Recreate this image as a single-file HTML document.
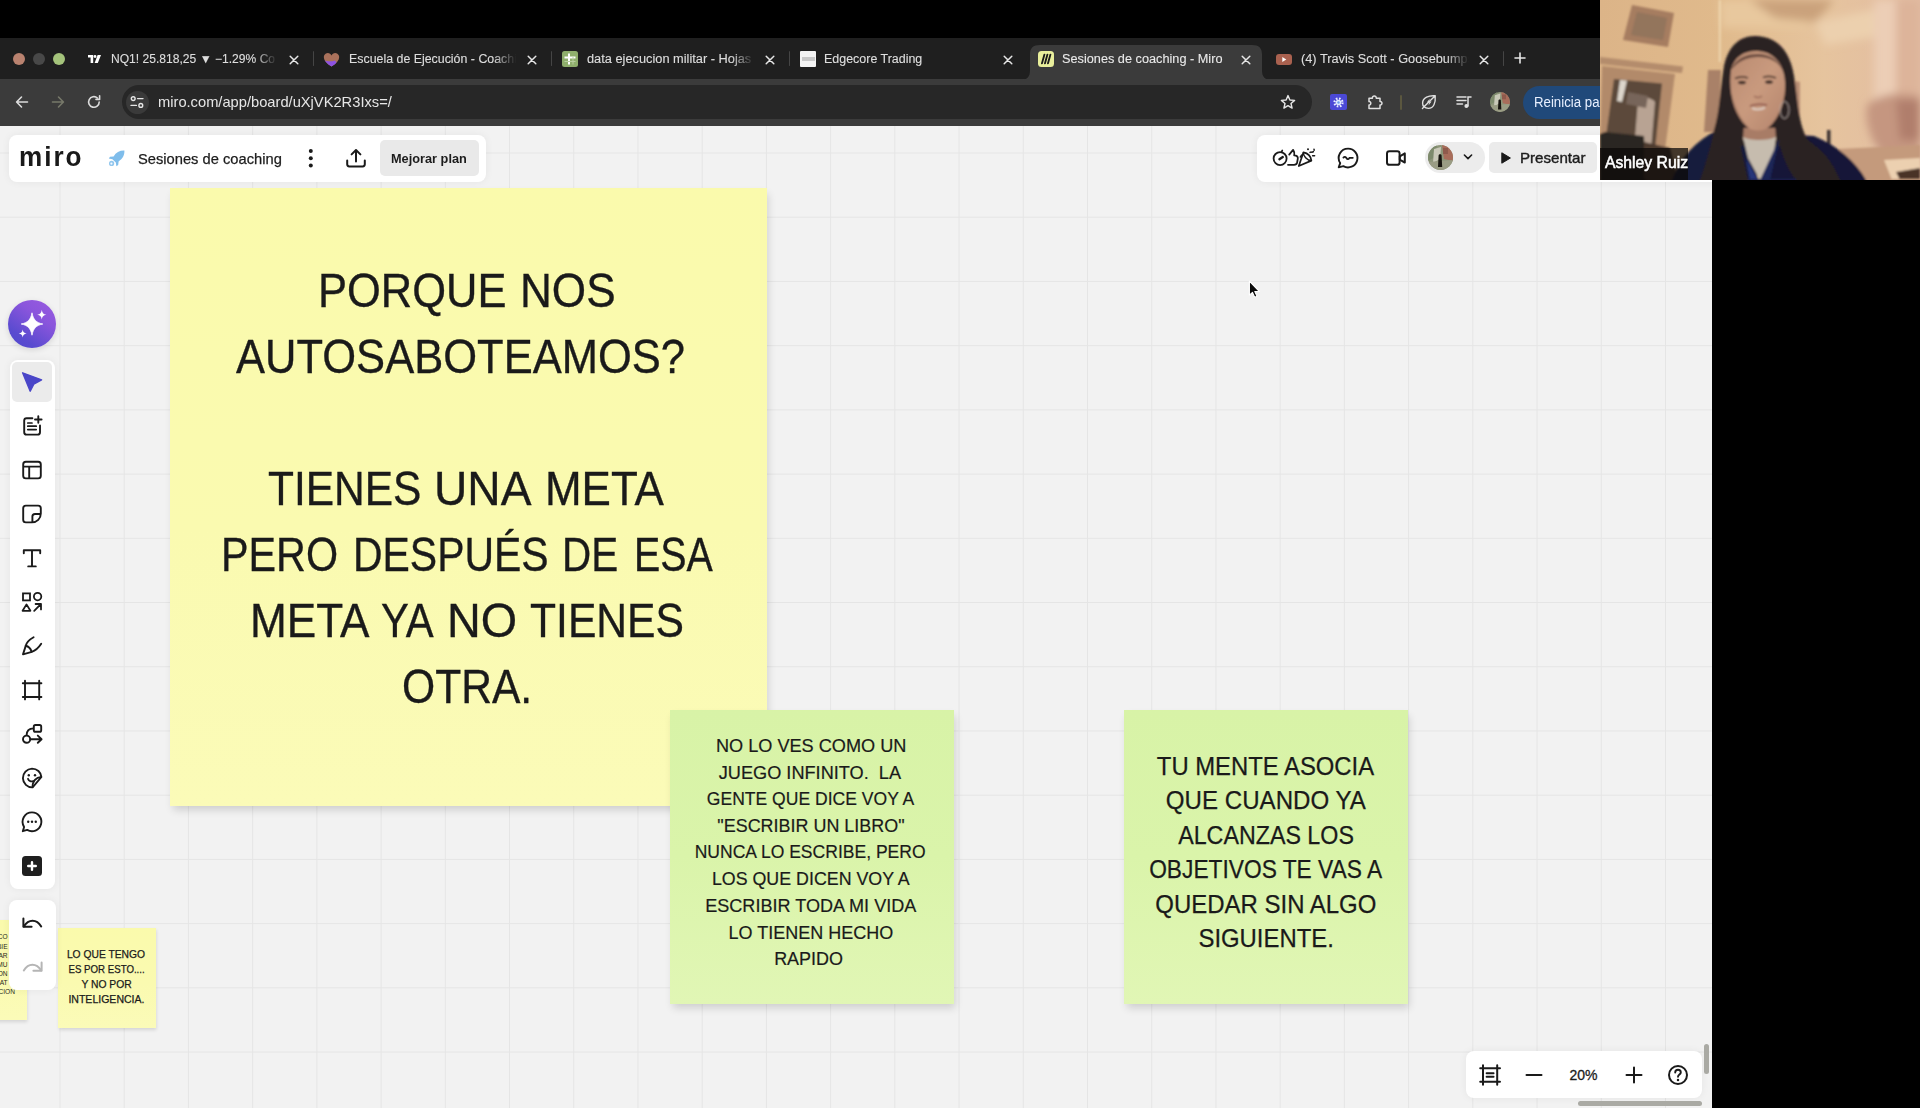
<!DOCTYPE html>
<html lang="es">
<head>
<meta charset="utf-8">
<title>Sesiones de coaching - Miro</title>
<style>
*{box-sizing:border-box;margin:0;padding:0}
html,body{width:1920px;height:1108px;overflow:hidden;background:#000;font-family:"Liberation Sans",sans-serif;}
#root{position:relative;width:1920px;height:1108px;overflow:hidden;background:#000}
.abs{position:absolute}
/* browser chrome */
#tabstrip{left:0;top:38px;width:1920px;height:42px;background:#1f1f1f}
#toolbar{left:0;top:79px;width:1920px;height:47px;background:#3b3b3b}
.tab{position:absolute;top:38px;height:42px;color:#e3e3e3;font-size:12px;line-height:42px;white-space:nowrap}
.tabtxt{position:absolute;top:0;overflow:hidden;height:42px}
.tabx{position:absolute;top:15px;width:11px;height:11px}
.sep{position:absolute;top:51px;width:1px;height:16px;background:#4a4a4a}
#activetab{left:1030px;top:44px;width:232px;height:36px;background:#3b3b3b;border-radius:10px 10px 0 0}
#omni{left:122.3px;top:85.2px;width:1189.5px;height:33.6px;border-radius:17px;background:#272727}
#url{left:157.5px;top:86px;height:33px;line-height:32px;font-size:14.5px;color:#e6e6e6;white-space:nowrap;transform-origin:0 50%}

.ico{position:absolute;overflow:visible}
.ttxt{-webkit-text-stroke:0.12px #dedede;position:absolute;top:38px;height:42px;line-height:42px;font-size:12px;color:#dedede;white-space:nowrap;overflow:hidden;transform-origin:0 50%}
.fade{-webkit-mask-image:linear-gradient(to right,#000 0,#000 calc(100% - 22px),transparent 100%);mask-image:linear-gradient(to right,#000 0,#000 calc(100% - 22px),transparent 100%)}
.tsep{position:absolute;top:51px;width:1.5px;height:15px;background:#454545;border-radius:1px}
.tl{position:absolute;top:52.5px;width:12px;height:12px;border-radius:50%}
/* canvas */
#canvas{left:0;top:126px;width:1712px;height:982px;background-color:#f2f2f2;
 background-image:linear-gradient(to right,#e5e5e5 1px,transparent 1px),linear-gradient(to bottom,#e5e5e5 1px,transparent 1px);
 background-size:64.23px 64.23px;background-position:59.5px 26.5px;overflow:hidden}
.panel{position:absolute;background:#fff;border-radius:8px;box-shadow:0 0 8px rgba(0,0,0,.06)}
.sticky{position:absolute;text-align:center;color:#1a1a1a;box-shadow:1.5px 5px 8px -1px rgba(0,0,0,.15)}
.ln{position:absolute;left:0;width:100%;text-align:center;white-space:nowrap;transform-origin:50% 50%}
.wd{position:absolute;white-space:nowrap;transform-origin:0 50%}
.yellow{background:linear-gradient(to bottom,#fafaac 0%,#fafab0 55%,#fbfbb8 100%)}
.green{background:linear-gradient(to bottom,#d8f3a7 0%,#daf4aa 50%,#e1f6b5 100%)}
</style>
</head>
<body>
<div id="root">
  <div class="abs" id="tabstrip"></div>
  <div class="abs" id="toolbar"></div>
  <!-- active tab -->
  <svg class="ico" style="left:1020px;top:45px" width="252" height="35" viewBox="0 0 252 36" preserveAspectRatio="none"><path d="M0 36 C7 36 10 33 10 26 L10 10 C10 3 13 0 20 0 L232 0 C239 0 242 3 242 10 L242 26 C242 33 245 36 252 36 Z" fill="#3b3b3b"/></svg>
  <!-- traffic lights -->
  <div class="tl" style="left:13px;background:#b9826f"></div>
  <div class="tl" style="left:33px;background:#484848"></div>
  <div class="tl" style="left:52.7px;background:#a4c37b"></div>
  <!-- tab 1 -->
  <svg class="ico" style="left:88px;top:55px" width="13" height="8" viewBox="0 0 13 8"><path d="M0 0H5.2V8H2.6V2.6H0Z" fill="#fff"/><circle cx="7" cy="1.5" r="1.4" fill="#fff"/><path d="M9.6 0H13L9.8 8H6.6Z" fill="#fff"/></svg>
  <div class="ttxt fade" id="t1" style="left:110.5px;--w:166px;width:164.9px;transform:scaleX(1.0068)">NQ1! 25.818,25 &#9660; &minus;1.29% Co</div>
  <svg class="ico" style="left:289px;top:54.5px" width="10" height="10" viewBox="0 0 10 10"><path d="M1.2 1.2L8.8 8.8M8.8 1.2L1.2 8.8" stroke="#e6e6e6" stroke-width="1.5" stroke-linecap="round" fill="none"/></svg>
  <div class="tsep" style="left:312.5px"></div>
  <!-- tab 2 -->
  <svg class="ico" style="left:323px;top:51px" width="17" height="16" viewBox="0 0 17 16"><defs><clipPath id="hc"><path d="M8.500 15.600C2 11.400 -0.400 7.400 1.400 4C3.200 0.800 7.400 1.400 8.500 4.600C9.600 1.400 13.800 0.800 15.600 4C17.400 7.400 15 11.400 8.500 15.600Z"/></clipPath></defs><g clip-path="url(#hc)"><rect width="17" height="16" fill="#a9715b"/><path d="M0 8.500C3 10.500 8 11 12 9.500L17 16H0Z" fill="#8d52e2"/></g></svg>
  <div class="ttxt fade" id="t2" style="left:348.5px;--w:167px;width:161.9px;transform:scaleX(1.0318)">Escuela de Ejecución - Coachi</div>
  <svg class="ico" style="left:527px;top:54.5px" width="10" height="10" viewBox="0 0 10 10"><path d="M1.2 1.2L8.8 8.8M8.8 1.2L1.2 8.8" stroke="#e6e6e6" stroke-width="1.5" stroke-linecap="round" fill="none"/></svg>
  <div class="tsep" style="left:550.5px"></div>
  <!-- tab 3 -->
  <svg class="ico" style="left:562px;top:51px" width="16" height="16" viewBox="0 0 16 16"><rect x="0" y="0" width="16" height="16" rx="2.5" fill="#8fae6c"/><path d="M7 2.5V13.5M2.5 6.5H13.5" stroke="#fff" stroke-width="2"/><path d="M2.5 10.5H13.5M11 6V13.5" stroke="#b9cfa0" stroke-width="1"/></svg>
  <div class="ttxt fade" id="t3" style="left:586.5px;--w:167px;width:156.6px;transform:scaleX(1.0662)">data ejecucion militar - Hojas d</div>
  <svg class="ico" style="left:765px;top:54.5px" width="10" height="10" viewBox="0 0 10 10"><path d="M1.2 1.2L8.8 8.8M8.8 1.2L1.2 8.8" stroke="#e6e6e6" stroke-width="1.5" stroke-linecap="round" fill="none"/></svg>
  <div class="tsep" style="left:788.5px"></div>
  <!-- tab 4 -->
  <div class="abs" style="left:800px;top:51px;width:16px;height:16px;background:#f4f4f4;border-radius:1px"></div>
  <div class="abs" style="left:801.5px;top:57px;width:13px;height:4px;background:#c9c9c9"></div>
  <div class="ttxt" id="t4" style="left:824px;--w:160px;width:154.2px;transform:scaleX(1.0376)">Edgecore Trading</div>
  <svg class="ico" style="left:1003px;top:54.5px" width="10" height="10" viewBox="0 0 10 10"><path d="M1.2 1.2L8.8 8.8M8.8 1.2L1.2 8.8" stroke="#e6e6e6" stroke-width="1.5" stroke-linecap="round" fill="none"/></svg>
  <!-- tab 5 active -->
  <svg class="ico" style="left:1038px;top:51px" width="16" height="16" viewBox="0 0 16 16"><rect width="16" height="16" rx="3.5" fill="#e9ef9c"/><path d="M4.6 3.6L3.4 12.4M7.6 3.6L6.4 12.4M10.6 3.6L9.4 12.4" stroke="#1a1a1a" stroke-width="1.9" stroke-linecap="round" transform="skewX(-8) translate(2.3 0)"/></svg>
  <div class="ttxt" id="t5" style="left:1062px;--w:175px;width:165.1px;color:#ececec;transform:scaleX(1.06)">Sesiones de coaching - Miro</div>
  <svg class="ico" style="left:1241px;top:54.5px" width="10" height="10" viewBox="0 0 10 10"><path d="M1.2 1.2L8.8 8.8M8.8 1.2L1.2 8.8" stroke="#e6e6e6" stroke-width="1.5" stroke-linecap="round" fill="none"/></svg>
  <!-- tab 6 -->
  <svg class="ico" style="left:1276px;top:53.5px" width="16" height="11" viewBox="0 0 16 11"><rect width="16" height="11" rx="3" fill="#a9614f"/><path d="M6.3 3L10.3 5.5L6.3 8Z" fill="#fff"/></svg>
  <div class="ttxt fade" id="t6" style="left:1300.5px;--w:168px;width:158.0px;transform:scaleX(1.0634)">(4) Travis Scott - Goosebumps</div>
  <svg class="ico" style="left:1479px;top:54.5px" width="10" height="10" viewBox="0 0 10 10"><path d="M1.2 1.2L8.8 8.8M8.8 1.2L1.2 8.8" stroke="#e6e6e6" stroke-width="1.5" stroke-linecap="round" fill="none"/></svg>
  <div class="tsep" style="left:1502.5px"></div>
  <svg class="ico" style="left:1514px;top:52px" width="12" height="12" viewBox="0 0 12 12"><path d="M6 1V11M1 6H11" stroke="#e6e6e6" stroke-width="1.6" stroke-linecap="round"/></svg>

  <!-- toolbar -->
  <svg class="ico" style="left:14px;top:94px" width="16" height="16" viewBox="0 0 16 16"><path d="M13.5 8H3M7.5 3L2.6 8L7.5 13" stroke="#dcdcdc" stroke-width="1.6" fill="none" stroke-linecap="round" stroke-linejoin="round"/></svg>
  <svg class="ico" style="left:50px;top:94px" width="16" height="16" viewBox="0 0 16 16"><path d="M2.5 8H13M8.5 3L13.4 8L8.5 13" stroke="#77796a" stroke-width="1.6" fill="none" stroke-linecap="round" stroke-linejoin="round"/></svg>
  <svg class="ico" style="left:86px;top:94px" width="16" height="16" viewBox="0 0 16 16"><path d="M13.2 8A5.3 5.3 0 1 1 11.4 4" stroke="#dcdcdc" stroke-width="1.6" fill="none" stroke-linecap="round"/><path d="M13.6 1.8V5.4H10" stroke="#dcdcdc" stroke-width="1.6" fill="none" stroke-linecap="round" stroke-linejoin="round"/></svg>
  <div class="abs" id="omni"></div>
  <div class="abs" style="left:125.5px;top:90.5px;width:23px;height:23px;border-radius:50%;background:#3a3a3a"></div>
  <svg class="ico" style="left:130px;top:95px" width="14" height="14" viewBox="0 0 14 14"><circle cx="3.2" cy="3.6" r="1.9" stroke="#e6e6e6" stroke-width="1.4" fill="none"/><path d="M7.6 3.6H13" stroke="#e6e6e6" stroke-width="1.4" stroke-linecap="round"/><circle cx="10.8" cy="10.4" r="1.9" stroke="#e6e6e6" stroke-width="1.4" fill="none"/><path d="M1 10.4H6.4" stroke="#e6e6e6" stroke-width="1.4" stroke-linecap="round"/></svg>
  <div class="abs" id="url" style=";transform:scaleX(1.0125)">miro.com/app/board/uXjVK2R3Ixs=/</div>
  <svg class="ico" style="left:1280px;top:94px" width="16" height="16" viewBox="0 0 16 16"><path d="M8 1.6L9.9 6L14.6 6.4L11 9.5L12.1 14.1L8 11.6L3.9 14.1L5 9.5L1.4 6.4L6.1 6Z" stroke="#e6e6e6" stroke-width="1.4" fill="none" stroke-linejoin="round"/></svg>
  <!-- extension icons -->
  <div class="abs" style="left:1330px;top:94px;width:16.5px;height:16px;background:#4b49d6;border-radius:2px"></div>
  <svg class="ico" style="left:1331.5px;top:95.5px" width="13" height="13" viewBox="0 0 13 13"><circle cx="6.5" cy="6.5" r="4" fill="none" stroke="#e8ecff" stroke-width="2.2" stroke-dasharray="1.6 1.55"/><circle cx="6.5" cy="6.5" r="2.8" fill="#dfe8ff"/><circle cx="6.5" cy="6.5" r="1.2" fill="#6aa0f0"/></svg>
  <svg class="ico" style="left:1366px;top:93px" width="18" height="18" viewBox="0 0 18 18"><path d="M3 5.2H6.4C6 2.2 10.6 2.2 10.2 5.2H14V8.6C16.6 8.2 16.6 12.4 14 12V15.4H3V12C5.4 12.2 5.4 8.4 3 8.6Z" stroke="#e0e0e0" stroke-width="1.5" fill="none" stroke-linejoin="round"/></svg>
  <div class="abs" style="left:1400.3px;top:95px;width:1.5px;height:15px;background:#5b573f;border-radius:1px"></div>
  <svg class="ico" style="left:1420px;top:93px" width="18" height="18" viewBox="0 0 18 18"><path d="M15.2 2.8C9 2.2 2.6 4.6 2.6 10.2C2.6 11.8 3.2 13 4 13.8L2.4 15.6M4 13.8C5 14.8 6.6 15.4 8.4 15.4C13.6 15.4 15.8 10 15.2 2.8Z" stroke="#e0e0e0" stroke-width="1.4" fill="none" stroke-linejoin="round" stroke-linecap="round"/><path d="M9.8 5.6L6.8 9.6H9.4L8.4 12.6L11.6 8.4H9Z" fill="#e0e0e0"/></svg>
  <svg class="ico" style="left:1456px;top:94px" width="16" height="16" viewBox="0 0 16 16"><path d="M1 3H10M1 6.5H10M1 10H6.5" stroke="#e0e0e0" stroke-width="1.5" stroke-linecap="round"/><path d="M12 12V3H15" stroke="#e0e0e0" stroke-width="1.5" fill="none" stroke-linecap="round"/><circle cx="10.4" cy="12" r="2" fill="#e0e0e0"/></svg>
  <svg class="ico" style="left:1489.700px;top:92px" width="20" height="20" viewBox="0 0 25 25"><g clip-path="url(#av1)"><rect width="25" height="25" fill="#8d9579"/><path d="M0 0H9L7 12L0 16Z" fill="#7d8a6c"/><path d="M6 4L13 2L12 14L5 18Z" fill="#c9c8b8"/><path d="M14 0H25V16L16 14Z" fill="#a86c5a"/><path d="M15 3H20V9H15Z" fill="#8f5a4c"/><path d="M0 17L25 15V25H0Z" fill="#9a9c84"/><path d="M10.600 10.500C10.600 8.800 13.600 8.800 13.600 10.500L14.200 22H10Z" fill="#17140f"/></g></svg>
  <div class="abs" id="bluepill" style="left:1522.5px;top:85.5px;width:120px;height:33.5px;border-radius:17px;background:#20497a"></div>
  <div class="abs" id="reinicia" style="left:1534px;top:85.5px;height:33.5px;line-height:33px;font-size:14px;color:#e8f0ff;white-space:nowrap;transform-origin:0 50%;transform:scaleX(0.9455)">Reinicia para actualizar</div>

  <div class="abs" id="canvas">
    <!--STICKIES-->
    <div class="sticky yellow" id="s1" style="left:169.6px;top:62px;width:597.3px;height:618.2px;font-size:47.2px;line-height:52.732px;-webkit-text-stroke:0.35px #1a1a1a;">
      <div class="wd" style="left:147.92px;top:76.97px;transform:scaleX(0.9211)">PORQUE</div>
      <div class="wd" style="left:350.16px;top:76.97px;transform:scaleX(0.9344)">NOS</div>
      <div class="wd" style="left:66.90px;top:143.07px;transform:scaleX(0.9223)">AUTOSABOTEAMOS?</div>
      <div class="wd" style="left:98.70px;top:275.27px;transform:scaleX(0.9000)">TIENES</div>
      <div class="wd" style="left:264.24px;top:275.27px;transform:scaleX(0.9776)">UNA</div>
      <div class="wd" style="left:375.87px;top:275.27px;transform:scaleX(0.9317)">META</div>
      <div class="wd" style="left:51.10px;top:340.97px;transform:scaleX(0.8750)">PERO</div>
      <div class="wd" style="left:183.13px;top:340.97px;transform:scaleX(0.8676)">DESPUÉS</div>
      <div class="wd" style="left:392.87px;top:340.97px;transform:scaleX(0.8567)">DE</div>
      <div class="wd" style="left:464.46px;top:340.97px;transform:scaleX(0.8344)">ESA</div>
      <div class="wd" style="left:80.16px;top:407.17px;transform:scaleX(0.9358)">META</div>
      <div class="wd" style="left:211.71px;top:407.17px;transform:scaleX(0.8862)">YA</div>
      <div class="wd" style="left:277.24px;top:407.17px;transform:scaleX(0.9908)">NO</div>
      <div class="wd" style="left:360.00px;top:407.17px;transform:scaleX(0.9036)">TIENES</div>
      <div class="wd" style="left:232.79px;top:473.07px;transform:scaleX(0.9029)">OTRA.</div>
    </div>
    <div class="sticky green" id="s2" style="left:670px;top:584px;width:283.5px;height:293.6px;font-size:18.6px;line-height:20.78px;-webkit-text-stroke:0.2px #1a1a1a;">
      <div class="ln" id="s2_0" style="top:25.86px;transform:translateX(-0.61px) scaleX(0.9751)">NO LO VES COMO UN</div>
      <div class="ln" id="s2_1" style="top:52.56px;transform:translateX(-1.87px) scaleX(0.9766)">JUEGO INFINITO.&nbsp; LA</div>
      <div class="ln" id="s2_2" style="top:79.16px;transform:translateX(-1.28px) scaleX(0.9436)">GENTE QUE DICE VOY A</div>
      <div class="ln" id="s2_3" style="top:105.76px;transform:translateX(-0.81px) scaleX(0.9648)">"ESCRIBIR UN LIBRO"</div>
      <div class="ln" id="s2_4" style="top:132.36px;transform:translateX(-1.61px) scaleX(0.9428)">NUNCA LO ESCRIBE, PERO</div>
      <div class="ln" id="s2_5" style="top:159.26px;transform:translateX(-0.99px) scaleX(0.9583)">LOS QUE DICEN VOY A</div>
      <div class="ln" id="s2_6" style="top:185.96px;transform:translateX(-0.98px) scaleX(0.9714)">ESCRIBIR TODA MI VIDA</div>
      <div class="ln" id="s2_7" style="top:212.56px;transform:translateX(-0.89px) scaleX(0.9679)">LO TIENEN HECHO</div>
      <div class="ln" id="s2_8" style="top:239.26px;transform:translateX(-3.19px) scaleX(0.9657)">RAPIDO</div>
    </div>
    <div class="sticky green" id="s3" style="left:1124.2px;top:584px;width:283.9px;height:293.6px;font-size:25.1px;line-height:28.042px;-webkit-text-stroke:0.25px #1a1a1a;">
      <div class="ln" id="s3_0" style="top:42.38px;transform:translateX(-0.48px) scaleX(0.9502)">TU MENTE ASOCIA</div>
      <div class="ln" id="s3_1" style="top:76.48px;transform:translateX(-0.09px) scaleX(0.9604)">QUE CUANDO YA</div>
      <div class="ln" id="s3_2" style="top:111.08px;transform:translateX(0.08px) scaleX(0.9267)">ALCANZAS LOS</div>
      <div class="ln" id="s3_3" style="top:145.33px;transform:translateX(-0.29px) scaleX(0.9064)">OBJETIVOS TE VAS A</div>
      <div class="ln" id="s3_4" style="top:179.83px;transform:translateX(-0.11px) scaleX(0.9548)">QUEDAR SIN ALGO</div>
      <div class="ln" id="s3_5" style="top:214.48px;transform:translateX(0.22px) scaleX(0.9518)">SIGUIENTE.</div>
    </div>
    <div class="sticky yellow" id="s4" style="left:58px;top:802px;width:98.1px;height:100px;font-size:10.5px;line-height:11.731px;-webkit-text-stroke:0.25px #1a1a1a;box-shadow:0.5px 2px 3.5px rgba(0,0,0,.13);">
      <div class="ln" id="s4_0" style="top:20.89px;transform:translateX(-1.09px) scaleX(0.9797)">LO QUE TENGO</div>
      <div class="ln" id="s4_1" style="top:35.99px;transform:translateX(-0.45px) scaleX(0.9207)">ES POR ESTO....</div>
      <div class="ln" id="s4_2" style="top:51.09px;transform:translateX(-0.45px) scaleX(0.9820)">Y NO POR</div>
      <div class="ln" id="s4_3" style="top:66.19px;transform:translateX(-0.60px) scaleX(1.0027)">INTELIGENCIA.</div>
    </div>
    <div class="sticky yellow" id="s5" style="left:-72px;top:794.3px;width:99px;height:99.5px;font-size:6.6px;line-height:9.2px;color:#2a2a20;box-shadow:0.5px 2px 3.5px rgba(0,0,0,.13)">
      <div style="position:absolute;right:19.4px;top:12px;text-align:right;white-space:nowrap">CO<br>BIE<br>AR<br>MU<br>ON<br>MAT</div>
      <div style="position:absolute;right:12px;top:67.2px;text-align:right;white-space:nowrap">CION</div>
    </div>
<!--/STICKIES-->
  </div>


  <!-- MIRO UI (page coords) -->
  <div class="panel" id="ptop" style="left:8.5px;top:135px;width:477.5px;height:46.5px"></div>
  <div class="abs" id="logo" style="left:18.500px;top:140px;height:34px;line-height:34px;font-size:28px;font-weight:bold;color:#1a1a1a;letter-spacing:2.100px;white-space:nowrap;transform-origin:0 50%;transform:scaleX(0.9323)">miro</div>
  <svg class="ico" style="left:108px;top:149.5px" width="17" height="17" viewBox="0 0 17 17"><path d="M16.4 0.6C12 0.4 8 2.2 5.6 6.4L2 6.8L0.8 8.6L4.4 9.2L7.8 12.6L8.4 16.2L10.2 15L10.6 11.4C14.8 9 16.6 5 16.4 0.6Z" fill="#7fbdeb"/><circle cx="3.6" cy="13.4" r="2.6" fill="#7fbdeb" opacity=".85"/><circle cx="3.4" cy="13.6" r="1.1" fill="#f5f9ff"/></svg>
  <div class="abs" id="bname" style="-webkit-text-stroke:0.250px #1c1c1c;left:137.600px;top:140.700px;height:36px;line-height:36px;font-size:15px;color:#1c1c1c;white-space:nowrap;transform-origin:0 50%;transform:scaleX(0.9800)">Sesiones de coaching</div>
  <svg class="ico" style="left:307px;top:147px" width="8" height="23" viewBox="0 0 8 23"><circle cx="3.8" cy="4" r="2" fill="#1a1a1a"/><circle cx="3.8" cy="11.2" r="2" fill="#1a1a1a"/><circle cx="3.8" cy="18.4" r="2" fill="#1a1a1a"/></svg>
  <svg class="ico" style="left:344px;top:146px" width="24" height="24" viewBox="0 0 24 24"><path d="M3.2 14.5V18.3C3.2 19.6 4 20.4 5.3 20.4H18.7C20 20.4 20.8 19.6 20.8 18.3V14.5" stroke="#1a1a1a" stroke-width="2" fill="none" stroke-linecap="round"/><path d="M12 15.5V4.2M7.6 8.4L12 4L16.4 8.4" stroke="#1a1a1a" stroke-width="2" fill="none" stroke-linecap="round" stroke-linejoin="round"/></svg>
  <div class="abs" style="left:380px;top:140px;width:98.5px;height:35.5px;border-radius:5px;background:#e9e9e9"></div>
  <div class="abs" id="mejorar" style="left:390.700px;top:140.500px;height:35.5px;line-height:36px;font-size:13px;font-weight:bold;color:#1c1c1c;white-space:nowrap;transform-origin:0 50%;transform:scaleX(0.9806)">Mejorar plan</div>

  <div class="panel" id="pright" style="left:1256.500px;top:135px;width:470px;height:46.500px"></div>
  <!-- timer / 3 / party -->
  <svg class="ico" style="left:1272px;top:146px" width="44" height="24" viewBox="0 0 44 24"><circle cx="8.100" cy="12.600" r="6.500" stroke="#1a1a1a" stroke-width="1.800" fill="none"/><path d="M7.400 13.200L10.800 11" stroke="#1a1a1a" stroke-width="2.300" stroke-linecap="round"/><path d="M9.600 5.800L10.300 4.400" stroke="#1a1a1a" stroke-width="1.700" stroke-linecap="round"/><path d="M17.200 8.600L21.100 3.900C22.200 5.400 22.600 7.400 22.200 9.400C24.600 9.400 26.200 10.600 25.800 12.600L25.200 16.200C24.800 18 23.600 18.800 22 18.800H16" stroke="#1a1a1a" stroke-width="1.800" fill="none" stroke-linecap="round" stroke-linejoin="round"/><path d="M26.800 20L31.400 6.400C35.600 7.200 38.800 10.400 39.400 14.600Z" stroke="#1a1a1a" stroke-width="1.700" fill="none" stroke-linejoin="round"/><path d="M31.400 6.400C31 9.800 35 14.400 39.400 14.600" stroke="#1a1a1a" stroke-width="1.500" fill="none"/><path d="M29.600 9.200L28.400 11" stroke="#1a1a1a" stroke-width="1.600" stroke-linecap="round"/><circle cx="36" cy="3.300" r="1" fill="#1a1a1a"/><path d="M38 6.400C39.200 5.600 40.200 6.800 41.400 5.600M42 3.200L42.200 4.200M40.600 9.800H42.600" stroke="#1a1a1a" stroke-width="1.500" fill="none" stroke-linecap="round"/></svg>
  <!-- chat -->
  <svg class="ico" style="left:1336px;top:146px" width="24" height="24" viewBox="0 0 24 24"><path d="M12.100 2.600A9.400 9.400 0 1 1 7.300 20.100L2.700 21.300L4.200 17.100A9.400 9.400 0 0 1 12.100 2.600Z" stroke="#1a1a1a" stroke-width="1.900" fill="none" stroke-linejoin="round"/><path d="M7.400 11.600C8.400 10.400 9.600 10.600 10.400 12C11.200 13.400 12.400 13.800 13.400 11.800H16.800" stroke="#1a1a1a" stroke-width="1.800" fill="none" stroke-linecap="round" stroke-linejoin="round"/></svg>
  <!-- video -->
  <svg class="ico" style="left:1384px;top:146px" width="24" height="24" viewBox="0 0 24 24"><rect x="3" y="5.2" width="12.6" height="13.6" rx="2.4" stroke="#1a1a1a" stroke-width="2" fill="none"/><path d="M15.8 10.4L20.8 7.4V16.6L15.8 13.6Z" stroke="#1a1a1a" stroke-width="2" fill="none" stroke-linejoin="round"/></svg>
  <div class="abs" style="left:1424.5px;top:142px;width:60px;height:31px;border-radius:16px;background:#ececec"></div>
  <svg class="ico" style="left:1428px;top:144.5px" width="25" height="25" viewBox="0 0 25 25"><defs><clipPath id="av1"><circle cx="12.5" cy="12.5" r="12.5"/></clipPath></defs><g clip-path="url(#av1)"><rect width="25" height="25" fill="#8d9579"/><path d="M0 0H9L7 12L0 16Z" fill="#7d8a6c"/><path d="M6 4L13 2L12 14L5 18Z" fill="#c9c8b8"/><path d="M14 0H25V16L16 14Z" fill="#a86c5a"/><path d="M15 3H20V9H15Z" fill="#8f5a4c"/><path d="M0 17L25 15V25H0Z" fill="#9a9c84"/><path d="M10.6 10.500C10.600 8.800 13.600 8.800 13.600 10.500L14.200 22H10Z" fill="#17140f"/></g></svg>
  <svg class="ico" style="left:1463px;top:153px" width="10" height="8" viewBox="0 0 10 8"><path d="M1.4 2L5 5.6L8.6 2" stroke="#1a1a1a" stroke-width="1.6" fill="none" stroke-linecap="round" stroke-linejoin="round"/></svg>
  <div class="abs" style="left:1489px;top:142px;width:107.500px;height:31px;border-radius:5px;background:#ebebeb"></div>
  <svg class="ico" style="left:1501px;top:151.5px" width="10" height="12" viewBox="0 0 10 12"><path d="M0.8 0.8L9.4 6L0.8 11.2Z" fill="#1a1a1a" stroke="#1a1a1a" stroke-width="1" stroke-linejoin="round"/></svg>
  <div class="abs" id="presentar" style="left:1519.500px;top:142px;height:31px;line-height:32px;font-size:15px;color:#1c1c1c;-webkit-text-stroke:0.4px #1c1c1c;white-space:nowrap;transform-origin:0 50%;transform:scaleX(1.007)">Presentar</div>

  <!-- AI button -->
  <div class="abs" style="left:8px;top:299.5px;width:48px;height:48px;border-radius:50%;background:linear-gradient(215deg,#9a5be0 0%,#8a55dc 35%,#5a4bd0 75%,#4f48cc 100%);box-shadow:0 2px 6px rgba(0,0,0,.12)"></div>
  <svg class="ico" style="left:8px;top:299.5px" width="48" height="48" viewBox="0 0 48 48"><path d="M24 12.800C25.200 19.600 28.400 22.800 34.800 24C28.400 25.200 25.200 28.400 24 35.200C22.800 28.400 19.600 25.200 13.200 24C19.600 22.800 22.800 19.600 24 12.800Z" fill="#fff" stroke="#fff" stroke-width="0.800" stroke-linejoin="round"/><path d="M33.8 9.8C34.3 13 35.3 14.2 38.4 14.7C35.3 15.2 34.3 16.4 33.8 19.6C33.3 16.4 32.3 15.2 29.2 14.7C32.3 14.2 33.3 13 33.8 9.8Z" fill="#fff"/><path d="M14.7 29.4C15.1 32 16 33 18.6 33.4C16 33.8 15.1 34.8 14.7 37.4C14.3 34.8 13.4 33.8 10.8 33.4C13.4 33 14.3 32 14.7 29.4Z" fill="#fff"/></svg>

  <!-- left toolbar -->
  <div class="panel" id="pleft" style="left:9.5px;top:359.5px;width:45.5px;height:529.5px"></div>
  <div class="abs" style="left:12px;top:362px;width:40px;height:40px;border-radius:5px;background:#ebebeb"></div>
  <svg class="ico" style="left:20px;top:370px" width="24" height="24" viewBox="0 0 24 24"><path d="M2.6 2.8L21.6 9.8L13.8 14.2L10.2 21.2Z" fill="#4a46c8" stroke="#4a46c8" stroke-width="1.4" stroke-linejoin="round"/></svg>
  <!-- notes+ -->
  <svg class="ico" style="left:20px;top:414px" width="24" height="24" viewBox="0 0 24 24"><path d="M12.400 4.200H6.600C5 4.200 4.200 5 4.200 6.600V18.200C4.200 19.800 5 20.600 6.600 20.600H17.600C19.200 20.600 20 19.800 20 18.200V11.400" stroke="#1a1a1a" stroke-width="1.900" fill="none" stroke-linecap="round"/><path d="M18.300 2.200V8.800M15 5.500H21.600" stroke="#1a1a1a" stroke-width="1.900" stroke-linecap="round"/><path d="M7.8 9H12M7.8 12.2H16.2M7.8 15.6H16.2" stroke="#1a1a1a" stroke-width="1.7" stroke-linecap="round"/></svg>
  <!-- layout -->
  <svg class="ico" style="left:20px;top:458px" width="24" height="24" viewBox="0 0 24 24"><rect x="3.2" y="3.8" width="17.6" height="16.6" rx="2.6" stroke="#1a1a1a" stroke-width="1.9" fill="none"/><path d="M3.2 8.6H20.8M9.2 8.6V20.4" stroke="#1a1a1a" stroke-width="1.9"/></svg>
  <!-- sticky -->
  <svg class="ico" style="left:20px;top:502px" width="24" height="24" viewBox="0 0 24 24"><path d="M5.8 3.6H18.2C19.8 3.6 20.8 4.6 20.8 6.2V11.4C20.8 16.6 17 20.4 11.8 20.4H5.8C4.2 20.4 3.2 19.4 3.2 17.8V6.2C3.2 4.6 4.2 3.6 5.8 3.6Z" stroke="#1a1a1a" stroke-width="1.9" fill="none"/><path d="M20.6 12H15C13.4 12 12.4 13 12.4 14.6V20.2" stroke="#1a1a1a" stroke-width="1.9" fill="none"/></svg>
  <!-- T -->
  <svg class="ico" style="left:20px;top:546px" width="24" height="24" viewBox="0 0 24 24"><path d="M3.8 7.2V4.2H20.2V7.2M12 4.2V20.2M8.2 20.4H15.8" stroke="#1a1a1a" stroke-width="1.9" fill="none" stroke-linecap="round" stroke-linejoin="round"/></svg>
  <!-- shapes -->
  <svg class="ico" style="left:20px;top:590px" width="24" height="24" viewBox="0 0 24 24"><rect x="3" y="3.4" width="7" height="7" stroke="#1a1a1a" stroke-width="1.8" fill="none"/><circle cx="17.6" cy="6.6" r="3.7" stroke="#1a1a1a" stroke-width="1.8" fill="none"/><path d="M6.5 14.4L10.4 20.8H2.6Z" stroke="#1a1a1a" stroke-width="1.8" fill="none" stroke-linejoin="round"/><path d="M14.2 20.8L20.8 14.2M15.6 14H21V19.4" stroke="#1a1a1a" stroke-width="1.8" fill="none" stroke-linecap="round" stroke-linejoin="round"/></svg>
  <!-- pen -->
  <svg class="ico" style="left:20px;top:634px" width="24" height="24" viewBox="0 0 24 24"><path d="M13.6 3.2C9.4 5.6 6.6 8 5.8 11.6L3 20.4L11.8 17.8C15.8 16.6 18.6 13.8 21.2 9.8" stroke="#1a1a1a" stroke-width="1.9" fill="none" stroke-linecap="round" stroke-linejoin="round"/><path d="M5.8 11.8C8.4 12.4 10.6 14.6 11.6 17.6" stroke="#1a1a1a" stroke-width="1.9" fill="none" stroke-linecap="round"/></svg>
  <!-- frame -->
  <svg class="ico" style="left:20px;top:678px" width="24" height="24" viewBox="0 0 24 24"><path d="M5 2.800V21.400M19.200 2.800V21.400M2.800 5.200H21.400M2.800 19H21.400" stroke="#1a1a1a" stroke-width="1.900" stroke-linecap="round"/></svg>
  <!-- diagram -->
  <svg class="ico" style="left:20px;top:722px" width="24" height="24" viewBox="0 0 24 24"><circle cx="6.6" cy="17.2" r="3.6" stroke="#1a1a1a" stroke-width="1.9" fill="none"/><rect x="13.8" y="3" width="7.4" height="6.8" rx="1.6" stroke="#1a1a1a" stroke-width="1.9" fill="none"/><path d="M6.6 13.4C6.6 8.6 9.4 6.4 13.6 6.4" stroke="#1a1a1a" stroke-width="1.9" fill="none"/><path d="M10.4 17.2H21.4M17.8 13.6L21.6 17.2L17.8 20.8" stroke="#1a1a1a" stroke-width="1.9" fill="none" stroke-linecap="round" stroke-linejoin="round"/></svg>
  <!-- sticker -->
  <svg class="ico" style="left:20px;top:766px" width="24" height="24" viewBox="0 0 24 24"><path d="M21.4 11C21 6.200 17 2.600 12 2.600A9.400 9.400 0 0 0 12.600 21.400Z" stroke="#1a1a1a" stroke-width="1.900" fill="none" stroke-linejoin="round"/><path d="M21.400 11C16 11.400 12.400 15 12.600 21.400" stroke="#1a1a1a" stroke-width="1.900" fill="none"/><circle cx="8.800" cy="9.200" r="1.200" fill="#1a1a1a"/><circle cx="15" cy="9.200" r="1.200" fill="#1a1a1a"/><path d="M8 12.800C9 15.200 11.200 16 13.200 15" stroke="#1a1a1a" stroke-width="1.800" fill="none" stroke-linecap="round"/></svg>
  <!-- comment -->
  <svg class="ico" style="left:20px;top:810px" width="24" height="24" viewBox="0 0 24 24"><path d="M12 2.400A9.400 9.400 0 1 1 7.200 19.900L2.800 21.200L4.100 16.900A9.400 9.400 0 0 1 12 2.400Z" stroke="#1a1a1a" stroke-width="1.900" fill="none" stroke-linejoin="round"/><circle cx="8.200" cy="11.800" r="1.200" fill="#1a1a1a"/><circle cx="12" cy="11.800" r="1.200" fill="#1a1a1a"/><circle cx="15.800" cy="11.800" r="1.200" fill="#1a1a1a"/></svg>
  <!-- plus -->
  <div class="abs" style="left:22px;top:856px;width:20px;height:20px;border-radius:3.500px;background:#1f1f1f"></div>
  <svg class="ico" style="left:22px;top:856px" width="20" height="20" viewBox="0 0 20 20"><path d="M10 6.200V13.800M6.200 10H13.800" stroke="#fff" stroke-width="2.400" stroke-linecap="round"/></svg>

  <!-- undo/redo -->
  <div class="panel" id="pundo" style="left:9px;top:900px;width:46.500px;height:90px"></div>
  <svg class="ico" style="left:20px;top:911px" width="24" height="24" viewBox="0 0 24 24"><path d="M3.400 7.600V15.800H11.600" stroke="#1a1a1a" stroke-width="2" fill="none" stroke-linecap="round" stroke-linejoin="round"/><path d="M3.800 15.400C8.600 8 16.400 7.600 21.200 15.400" stroke="#1a1a1a" stroke-width="2" fill="none" stroke-linecap="round"/></svg>
  <svg class="ico" style="left:20px;top:955px" width="24" height="24" viewBox="0 0 24 24"><path d="M21.600 7.600V15.800H13.400" stroke="#b5b5b5" stroke-width="2" fill="none" stroke-linecap="round" stroke-linejoin="round"/><path d="M21.200 15.400C16.400 8 8.600 7.600 3.800 15.400" stroke="#b5b5b5" stroke-width="2" fill="none" stroke-linecap="round"/></svg>

  <!-- zoom panel -->
  <div class="panel" id="pzoom" style="left:1465.500px;top:1051px;width:236px;height:47px"></div>
  <svg class="ico" style="left:1477.500px;top:1062.500px" width="24" height="24" viewBox="0 0 24 24"><path d="M5 2.200V21.800M19.200 2.200V21.800M2.200 5.200H22M2.200 18.800H22" stroke="#1a1a1a" stroke-width="2" stroke-linecap="round"/><path d="M8.600 10.200H15.600M8.600 13.800H15.600" stroke="#1a1a1a" stroke-width="1.900" stroke-linecap="round"/></svg>
  <svg class="ico" style="left:1524.500px;top:1066px" width="18" height="18" viewBox="0 0 18 18"><path d="M1.500 9H16.500" stroke="#1a1a1a" stroke-width="2" stroke-linecap="round"/></svg>
  <div class="abs" id="zoomtxt" style="left:1563px;top:1052px;width:41px;height:46.500px;line-height:47.500px;font-size:14px;color:#1c1c1c;text-align:center;-webkit-text-stroke:0.300px #1c1c1c">20%</div>
  <svg class="ico" style="left:1624.500px;top:1066px" width="18" height="18" viewBox="0 0 18 18"><path d="M1.500 9H16.500M9 1.500V16.500" stroke="#1a1a1a" stroke-width="2" stroke-linecap="round"/></svg>
  <svg class="ico" style="left:1665.500px;top:1062.500px" width="24" height="24" viewBox="0 0 24 24"><circle cx="12" cy="12" r="9" stroke="#1a1a1a" stroke-width="2" fill="none"/><path d="M9.200 9.600C9.200 7.800 10.400 6.800 12 6.800C13.600 6.800 14.800 7.800 14.800 9.400C14.800 11.400 12 11.600 12 13.800" stroke="#1a1a1a" stroke-width="1.900" fill="none" stroke-linecap="round"/><circle cx="12" cy="17" r="1.250" fill="#1a1a1a"/></svg>
  <div class="abs" style="left:1703.500px;top:1043.500px;width:5.500px;height:30px;border-radius:3px;background:#aaaaa4"></div>
  <div class="abs" style="left:1578px;top:1100.500px;width:123.500px;height:5.500px;border-radius:3px;background:#aaaaa4"></div>
  <!-- mouse cursor -->
  <svg class="ico" style="left:1248.200px;top:279.500px" width="14" height="20" viewBox="0 0 14 20"><path d="M1.400 1.200V15.200L4.500 12.400L6.700 17.300L9 16.300L6.800 11.500H11.400Z" fill="#0a0a0a" stroke="#fff" stroke-width="1.100" stroke-linejoin="round"/></svg>
  <div class="abs" id="blackright" style="left:1712px;top:180px;width:208px;height:928px;background:#000"></div>
  <div class="abs" id="webcam" style="left:1600px;top:0;width:320px;height:180px;background:#dcb68b;overflow:hidden">
    <svg width="320" height="180" viewBox="0 0 320 180" style="position:absolute;left:0;top:0">
      <defs>
        <filter id="b1" x="-10%" y="-10%" width="120%" height="120%"><feGaussianBlur stdDeviation="1.1"/></filter>
        <filter id="b3" x="-20%" y="-20%" width="140%" height="140%"><feGaussianBlur stdDeviation="4"/></filter>
        <linearGradient id="wall" x1="0" x2="1" y1="0" y2="0"><stop offset="0" stop-color="#dcb488"/><stop offset=".38" stop-color="#e0ba8c"/><stop offset=".7" stop-color="#e6c49e"/><stop offset="1" stop-color="#e2bca2"/></linearGradient>
        <linearGradient id="face" x1="0" x2="1" y1="0" y2="1"><stop offset="0" stop-color="#b98a70"/><stop offset=".5" stop-color="#c99a7e"/><stop offset="1" stop-color="#b4846c"/></linearGradient>
      </defs>
      <rect width="320" height="180" fill="url(#wall)"/>
      <g filter="url(#b3)">
        <path d="M120 0H240L205 28H122Z" fill="#e8c89e"/>
        <path d="M150 0H235L215 22L175 18Z" fill="#caa27c"/>
        <path d="M215 22L320 0V30L225 45Z" fill="#ecd0ae"/>
        <rect x="274" y="0" width="22" height="150" fill="#ecceb6"/>
        <rect x="296" y="0" width="24" height="95" fill="#ddb49a"/>
        <path d="M268 104C285 92 305 92 320 96V160H286C274 150 262 118 268 104Z" fill="#c59680"/>
        <path d="M296 100H320V140H300Z" fill="#b07e6c"/>
      </g>
      <g filter="url(#b1)">
        <path d="M119 0H120.600V62H119Z" fill="#f1dcb6"/>
        <!-- picture frame -->
        <path d="M32 5L74 13L68 47L23 40Z" fill="#a67d60"/>
        <path d="M37 12L67 18L63 40L31 35Z" fill="#93745c"/>
        <!-- mirror / dresser -->
        <path d="M0 57L83 66.500L82 73L0 64Z" fill="#b48c6c"/>
        <path d="M2 66L75 74L65 150H0Z" fill="#b28a6a"/>
        <path d="M14 79L62 83.500L55 150H4Z" fill="#5b483b"/>
        <path d="M20 80L27 80.500L22 102L17 101Z" fill="#ddd6cc"/>
        <path d="M38 100C44 96 52 98 55 102L51 150H34Z" fill="#b8a393"/>
        <path d="M28 92L48 96L46 108L26 104Z" fill="#77655a"/>
        <path d="M5 132L44 136L46 180H0V134Z" fill="#2a2522"/><path d="M44 142L70 148L80 190H44Z" fill="#4e3a2e"/>
        <!-- chair pieces -->
        <path d="M108 70H121L119 132H104Z" fill="#a98168"/>
        <path d="M191 80L200 82V116H193Z" fill="#b98e74"/>
        <!-- bed right -->
        <path d="M238 149L320 145V180H262Z" fill="#c49a7c"/>
        <path d="M284 160L320 158V180H292Z" fill="#ecd0b0"/>
        <path d="M296 172L320 168V180H300Z" fill="#4a3228"/>
        <rect x="227" y="130" width="3.500" height="18" fill="#3a3030"/>
        <!-- jacket -->
        <path d="M72 180C80 158 96 140 118 130L150 136L158 180Z" fill="#131a3c"/>
        <path d="M158 180L176 134L214 136C238 146 256 162 266 180Z" fill="#121838"/>
        <!-- shirt -->
        <path d="M134 116H182L180 146H138Z" fill="#2a2024"/><path d="M144 122H175L176 140L160 146L143 140Z" fill="#a87c66"/><path d="M143 137C150 141 168 141 176 137L173 160L160 180L148 158Z" fill="#c6bcae"/>
        <path d="M146 158L158 180H150Z" fill="#27357a"/>
        <path d="M174 150L180 136L170 180H160Z" fill="#1d2858"/>
        <!-- hair -->
        <path d="M155 36C138 36 128 48 124 66C120 90 120 110 114 130C110 150 104 168 100 180H148C144 160 140 146 138 128L176 128C180 150 186 168 196 180H240C232 160 222 150 208 140C198 124 198 100 194 76C190 50 176 36 155 36Z" fill="#2a2024"/>
        <!-- face -->
        <path d="M131 70C134 56 146 50 158 51C174 52 184 64 185 82C186 100 180 116 170 126C164 132 152 132 146 126C134 114 128 92 131 70Z" fill="url(#face)"/>
        <path d="M131 70C136 58 146 54 158 54C170 54 180 60 184 74C180 62 170 57 158 57C146 57 138 62 131 70Z" fill="#6a4c40"/>
        <path d="M135 78.500C139 76.500 144 76.500 148 78M163 77.500C167 76 172 76 176 78" stroke="#4a342c" stroke-width="1.600" fill="none"/><ellipse cx="142" cy="82.500" rx="4" ry="1.800" fill="#3a2a26"/><ellipse cx="169" cy="82" rx="4" ry="1.800" fill="#3a2a26"/><path d="M131 90C134 110 142 124 150 128C140 120 134 104 131 90Z" fill="#a67a64"/><path d="M185 88C184 108 176 122 168 128C178 118 183 104 185 88Z" fill="#a67a64"/>
        <path d="M152 108C155 110 161 110 165 107.500" stroke="#e0d2c8" stroke-width="1.800" fill="none"/>
        <path d="M150 106C155 104 162 104 167 105" stroke="#8a5048" stroke-width="1.400" fill="none"/>
        <path d="M154 96C156 98 160 98 162 96" stroke="#9a6a58" stroke-width="1.600" fill="none"/>
        <ellipse cx="184.500" cy="110" rx="4.500" ry="8.500" fill="none" stroke="#b8aca4" stroke-width="0.900"/>
        
        <rect x="0" y="179" width="46" height="10" fill="#2a2522"/><rect x="72" y="179" width="30" height="10" fill="#131a3c"/><rect x="100" y="179" width="48" height="10" fill="#2a2024"/><rect x="148" y="179" width="48" height="10" fill="#1a2250"/><rect x="196" y="179" width="44" height="10" fill="#2a2024"/><rect x="240" y="179" width="26" height="10" fill="#121838"/><rect x="266" y="179" width="60" height="10" fill="#c49a7c"/>
      </g>
      <rect x="0" y="148" width="88" height="32" fill="#0c0a08" opacity=".74"/>
    </svg>
    <div id="ashley" style="position:absolute;left:5.300px;top:150.900px;height:24px;line-height:24px;font-size:16px;font-weight:normal;-webkit-text-stroke:0.550px #fff;color:#fff;white-space:nowrap;transform-origin:0 50%;transform:scaleX(0.9824)">Ashley Ruiz</div>
  </div>
</div>
</body>
</html>
